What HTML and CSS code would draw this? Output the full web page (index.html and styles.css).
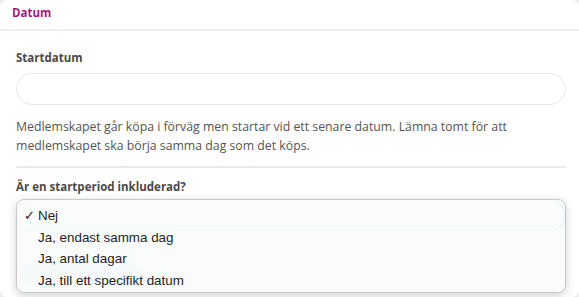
FILE: index.html
```html
<!DOCTYPE html>
<html lang="sv">
<head>
  <meta charset="UTF-8" />
  <title>Datum</title>
  <link rel="stylesheet" href="styles.css">
</head>
<body>
  <div class="card">
    <div class="card-head">Datum</div>
    <div class="card-body">
      <label class="label">Startdatum</label>
      <div class="input"></div>
      <p class="help">Medlemskapet går köpa i förväg men startar vid ett senare datum. Lämna tomt för att medlemskapet ska börja samma dag som det köps.</p>
      <hr class="divider">
      <label class="label">Är en startperiod inkluderad?</label>
      <div class="select-wrap">
        <div class="select"></div>
        <div class="ghost-btn"></div>
        <ul class="menu">
          <li class="checked"><span class="check">✓</span>Nej</li>
          <li><span class="check"></span>Ja, endast samma dag</li>
          <li><span class="check"></span>Ja, antal dagar</li>
          <li><span class="check"></span>Ja, till ett specifikt datum</li>
        </ul>
      </div>
    </div>
  </div>
</body>
</html>
```

FILE: styles.css
```css
body {
  margin: 0;
  background: #ececec;
  font-family: 'Open Sans', sans-serif;
  color: #555;
  overflow: hidden;
}

.card {
  background: white;
  height: 297px;
  border-radius: 7px;
  overflow: hidden;
}

.card-head {
  height: 31px;
  box-sizing: border-box;
  padding: 5px 12px 0;
  font-size: 11.5px;
  font-weight: 700;
  color: #a3197f;
  border-bottom: 2px solid #f0f0f0;
}

.card-body {
  padding: 19px 13px 0 16px;
}

.label {
  display: block;
  font-size: 11.5px;
  font-weight: 700;
  color: #4a4a4a;
  line-height: 16px;
}

.input {
  margin-top: 7px;
  height: 30px;
  border: 1px solid #e6e6e6;
  border-radius: 16px;
}

.help {
  margin: 12px 0 0;
  font-size: 12.3px;
  line-height: 19px;
  color: #555;
}

.divider {
  margin: 11px 0 11px;
  border: none;
  border-top: 2px solid #e9e9e9;
}

.select-wrap {
  position: relative;
  margin-top: 3px;
  height: 96px;
}

.select {
  height: 30px;
  margin-top: 4px;
  border: 1px solid #bfe6ee;
  border-right: 2px solid #7fc6d2;
  border-radius: 16px;
}

.ghost-btn {
  width: 124px;
  height: 18px;
  margin: 34px 0 0 4px;
  border-radius: 9px;
  background: #d9f1f7;
}

.menu {
  position: absolute;
  left: 0;
  right: 0;
  top: 0;
  height: 94px;
  box-sizing: border-box;
  margin: 0;
  padding: 5px 0 0;
  list-style: none;
  background: rgba(249, 250, 250, 0.86);
  border: 1px solid #c9c9c9;
  border-radius: 8px;
  box-shadow: 0 3px 10px rgba(0, 0, 0, 0.18);
  font-family: 'Liberation Sans', Arial, sans-serif;
  font-size: 13.4px;
  color: #1f1f1f;
}

.menu li {
  display: flex;
  align-items: center;
  height: 21.5px;
}

.check {
  width: 21px;
  padding-left: 7px;
  box-sizing: border-box;
  font-family: 'DejaVu Sans', sans-serif;
  font-size: 13px;
  font-weight: 700;
}
```
